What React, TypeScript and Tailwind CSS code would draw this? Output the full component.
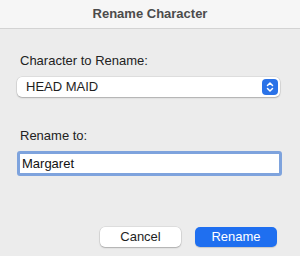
import React from "react";

export default function App() {
  const font = { fontFamily: '"Liberation Sans", Arial, sans-serif' };
  return (
    <div className="w-[300px] h-[256px] bg-[#ececec] flex flex-col overflow-hidden" style={font}>
      <div className="h-[29px] shrink-0 bg-[#f6f6f6] border-b border-[#d3d3d3] flex items-center justify-center">
        <span className="text-[13px] font-bold text-[#4b4b4b] leading-4">Rename Character</span>
      </div>
      <div className="flex flex-col pl-[17px] pr-[18px]">
        <div className="mt-[24px] pl-[3px] text-[13px] leading-4 text-[#222]">Character to Rename:</div>
        <div className="mt-[8px] mr-[2px] h-[20px] bg-white rounded-[5px] shadow-[0_0_0_0.5px_rgba(0,0,0,0.12),0_1px_1.5px_rgba(0,0,0,0.22)] flex items-center justify-between pl-[9px] pr-[2px]">
          <span className="text-[13px] leading-4 text-[#1e1e1e]">HEAD MAID</span>
          <div className="w-[16px] h-[16px] rounded-[4px] bg-[#2a72e8] flex items-center justify-center">
            <svg width="10" height="12" viewBox="0 0 10 12" fill="none" stroke="white" strokeWidth="1.5" strokeLinecap="round" strokeLinejoin="round">
              <path d="M2.5 4.5 L5 2 L7.5 4.5" />
              <path d="M2.5 7.5 L5 10 L7.5 7.5" />
            </svg>
          </div>
        </div>
        <div className="mt-[31px] pl-[3px] text-[13px] leading-4 text-[#222]">Rename to:</div>
        <div className="mt-[7px] h-[25px] rounded-[3px] border-[3px] border-[#7ea3dd] bg-white flex items-center pl-[2px]">
          <span className="text-[13px] leading-4 text-[#111]">Margaret</span>
        </div>
        <div className="mt-[51px] flex justify-end gap-[14px] pr-[5px]">
          <button className="w-[81px] h-[20px] bg-white rounded-[5px] shadow-[0_0_0_0.5px_rgba(0,0,0,0.12),0_1px_1.5px_rgba(0,0,0,0.22)] text-[13px] leading-4 text-[#1e1e1e]">Cancel</button>
          <button className="w-[82px] h-[20px] bg-[#1f6ff0] rounded-[5px] shadow-[0_1px_1px_rgba(0,0,0,0.15)] text-[13px] leading-4 text-white">Rename</button>
        </div>
      </div>
    </div>
  );
}
